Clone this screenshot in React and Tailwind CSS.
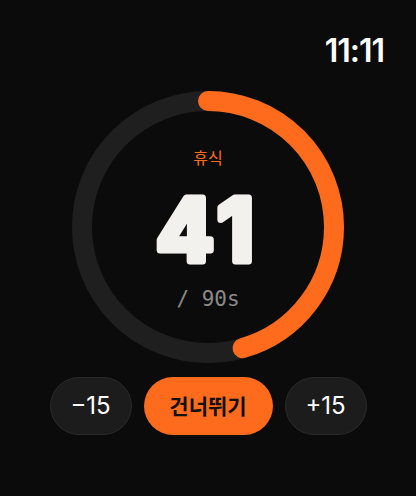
import React from "react";

export default function App() {
  const r = 126;
  const c = 2 * Math.PI * r;
  const frac = 41 / 90;
  return (
    <div className="w-[416px] h-[496px] bg-[#0b0b0b] flex flex-col items-center overflow-hidden font-[Inter,sans-serif]">
      <div className="w-full flex justify-end pr-[32px] pt-[33px] h-[91px]">
        <span className="text-white text-[32px] font-semibold leading-[36px] tracking-[-1px]">11:11</span>
      </div>
      <div className="relative w-[272px] h-[272px]">
        <svg className="absolute inset-0" width="272" height="272" viewBox="0 0 272 272">
          <circle cx="136" cy="136" r={r} fill="none" stroke="#1f1f1f" strokeWidth="20" />
          <circle
            cx="136"
            cy="136"
            r={r}
            fill="none"
            stroke="#ff6b1c"
            strokeWidth="20"
            strokeLinecap="round"
            strokeDasharray={`${c * frac} ${c}`}
            transform="rotate(-90 136 136)"
          />
        </svg>
        <div className="relative flex flex-col items-center pt-[54px]">
          <span className="text-[#ff6b1c] text-[16px] leading-[24px] font-normal font-['Noto_Sans_CJK_KR',sans-serif]">휴식</span>
          <svg width="180" height="116" viewBox="0 0 180 116" className="-mt-[7px] overflow-visible">
            <text
              x="90"
              y="99"
              textAnchor="middle"
              fontFamily="Inter, sans-serif"
              fontWeight="700"
              fontSize="86"
              fill="#f2f1ee"
              stroke="#f2f1ee"
              strokeWidth="7"
              strokeLinejoin="round"
              letterSpacing="6"
            >
              41
            </text>
          </svg>
          <span className="text-[#8a8a8a] text-[21px] leading-[28px] mt-[7px] font-['DejaVu_Sans_Mono',monospace]">/ 90s</span>
        </div>
      </div>
      <div className="flex gap-3 mt-[14px]">
        <button className="w-[82px] h-[58px] rounded-full bg-[#1c1c1c] border border-[#2a2a2a] text-white text-[24px] flex items-center justify-center">−15</button>
        <button className="w-[129px] h-[58px] rounded-full bg-[#ff6b1c] text-[#111] text-[21px] font-bold flex items-center justify-center font-['Noto_Sans_CJK_KR',sans-serif]">건너뛰기</button>
        <button className="w-[82px] h-[58px] rounded-full bg-[#1c1c1c] border border-[#2a2a2a] text-white text-[24px] flex items-center justify-center">+15</button>
      </div>
    </div>
  );
}
